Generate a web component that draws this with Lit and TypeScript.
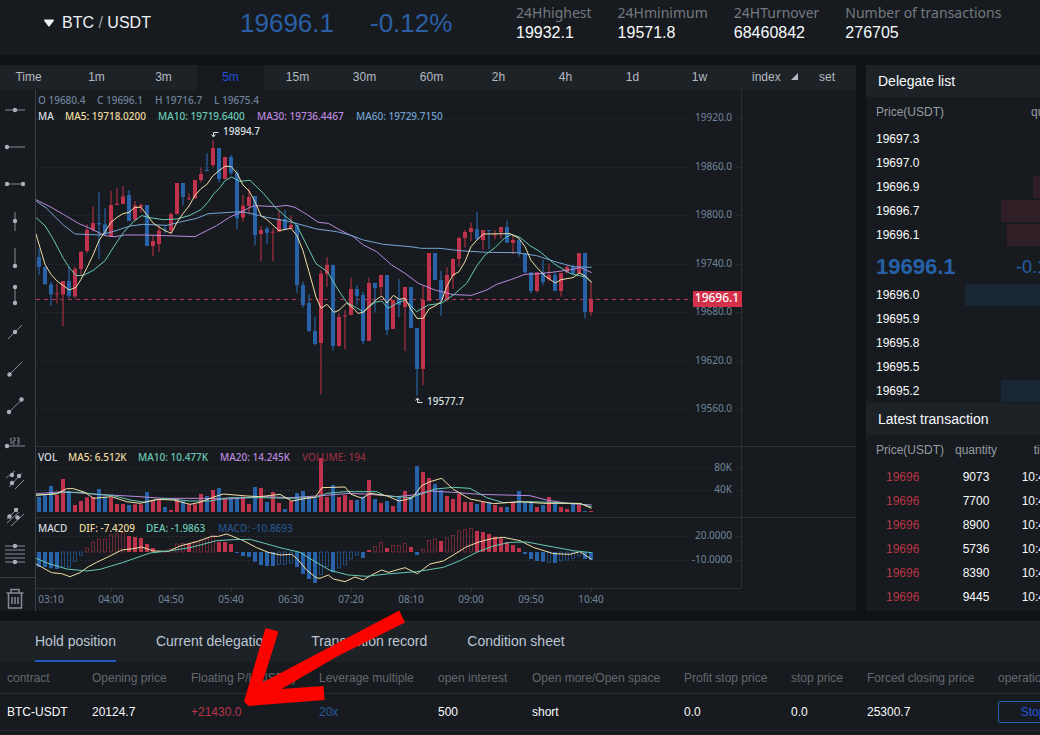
import { LitElement, html, svg, css } from "lit";
import { customElement, state } from "lit/decorators.js";
import { classMap } from "lit/directives/class-map.js";

/* Chart drawings are stored at three units to the pixel. */
type Candle = [string, number, number, number, number];

/* direction, high, body top, body bottom, low */
const CANDLES: Candle[] = [
  ["d", 490, 516, 546, 570], ["d", 546, 546, 598, 598], ["d", 590, 598, 628, 662], ["u", 595, 625, 628, 655],
  ["u", 588, 588, 628, 723], ["d", 545, 588, 632, 640], ["u", 545, 552, 634, 640], ["u", 500, 500, 552, 572],
  ["u", 418, 435, 498, 505], ["u", 365, 414, 435, 440], ["d", 322, 414, 418, 522], ["d", 370, 418, 448, 452],
  ["u", 318, 360, 454, 456], ["u", 308, 356, 360, 360], ["u", 303, 334, 357, 357], ["d", 315, 330, 408, 408],
  ["u", 348, 362, 404, 408], ["u", 355, 360, 366, 382], ["d", 360, 360, 483, 483], ["u", 450, 468, 483, 513],
  ["u", 420, 437, 477, 500], ["d", 420, 431, 434, 445], ["u", 382, 387, 437, 447], ["u", 294, 294, 387, 387],
  ["d", 294, 294, 336, 362], ["u", 325, 340, 343, 345], ["u", 285, 285, 340, 340], ["u", 247, 267, 285, 292],
  ["d", 205, 255, 258, 258], ["u", 165, 189, 240, 245], ["d", 189, 189, 282, 292], ["u", 216, 216, 282, 282],
  ["d", 210, 216, 264, 270], ["d", 255, 264, 400, 432], ["u", 330, 362, 398, 410], ["u", 310, 336, 363, 385],
  ["d", 333, 333, 450, 482], ["u", 422, 435, 447, 528], ["d", 425, 431, 444, 477], ["u", 428, 440, 443, 528],
  ["u", 378, 402, 440, 440], ["d", 375, 402, 433, 433], ["u", 392, 420, 430, 432], ["d", 420, 420, 600, 623],
  ["d", 590, 600, 660, 668], ["d", 628, 654, 738, 740], ["d", 695, 738, 777, 780], ["u", 556, 566, 774, 928],
  ["u", 516, 540, 567, 606], ["d", 540, 540, 783, 797], ["u", 685, 696, 783, 785], ["u", 675, 691, 694, 793],
  ["u", 578, 612, 690, 690], ["d", 600, 612, 633, 660], ["d", 620, 630, 768, 777], ["u", 578, 594, 768, 768],
  ["d", 594, 594, 609, 682], ["u", 570, 570, 606, 630], ["d", 570, 570, 735, 750], ["u", 645, 645, 732, 732],
  ["d", 582, 640, 660, 697], ["u", 606, 606, 666, 798], ["d", 606, 606, 729, 729], ["d", 729, 729, 852, 932],
  ["u", 600, 645, 852, 900], ["u", 504, 504, 648, 648], ["d", 504, 504, 585, 585], ["d", 557, 585, 645, 692],
  ["u", 547, 570, 645, 650], ["u", 520, 522, 573, 612], ["u", 455, 459, 522, 545], ["u", 435, 441, 459, 487],
  ["u", 413, 429, 441, 468], ["d", 381, 432, 462, 465], ["u", 435, 435, 465, 495], ["d", 435, 435, 438, 493],
  ["u", 435, 448, 451, 463], ["u", 426, 426, 442, 462], ["d", 407, 426, 473, 473], ["u", 450, 465, 474, 508],
  ["d", 460, 465, 505, 515], ["d", 505, 505, 562, 565], ["d", 562, 562, 618, 625], ["u", 562, 562, 618, 622],
  ["d", 524, 562, 591, 600], ["u", 535, 570, 583, 590], ["d", 562, 570, 618, 618], ["u", 564, 564, 618, 635],
  ["u", 540, 546, 562, 565], ["d", 540, 546, 565, 570], ["u", 504, 504, 565, 565], ["d", 504, 504, 681, 700],
  ["u", 590, 642, 681, 692],
];

const VOLUME_BASE = 201;
const VOLUMES = [
  156, 150, 123, 150, 102, 138, 180, 168, 157, 156, 132, 155, 157, 177, 177, 180, 178, 178, 141, 165, 165, 186, 195,
  160, 168, 178, 178, 147, 153, 135, 129, 158, 158, 160, 155, 177, 126, 129, 171, 141, 174, 192, 168, 144, 138, 155,
  160, 39, 156, 120, 156, 150, 165, 165, 155, 105, 162, 174, 168, 183, 155, 138, 155, 63, 81, 99, 117, 135, 153, 162,
  147, 171, 171, 177, 171, 171, 180, 186, 186, 171, 138, 171, 171, 186, 180, 156, 177, 186, 192, 177, 180, 198, 198,
];
const VOLUME_DOWN = new Set([
  0, 1, 2, 5, 10, 11, 15, 18, 21, 24, 28, 30, 32, 33, 36, 38, 41, 43, 44, 45, 46, 49, 53, 54, 56, 58, 60, 62, 63, 66,
  67, 73, 75, 78, 80, 81, 82, 84, 86, 89, 91,
]);

const MACD_ZERO = 321;
const MACD = [
  366, 366, 370, 372, 366, 366, 350, 332, 309, 291, 282, 282, 270, 267, 262, 273, 276, 279, 297, 309, 318, 319, 312,
  297, 295, 297, 290, 285, 280, 273, 291, 291, 297, 324, 333, 336, 350, 360, 363, 363, 358, 358, 354, 366, 387, 402,
  414, 388, 365, 382, 369, 360, 342, 330, 339, 315, 304, 292, 309, 302, 302, 295, 306, 330, 313, 286, 282, 288, 279,
  271, 258, 253, 250, 258, 261, 267, 275, 280, 291, 300, 309, 327, 342, 348, 350, 353, 354, 348, 345, 340, 333, 342,
  345,
];
const MACD_HOLLOW = new Set([
  4, 5, 6, 7, 8, 9, 10, 11, 12, 13, 14, 22, 23, 24, 26, 27, 28, 29, 40, 41, 42, 47, 48, 50, 51, 52, 53, 56, 57, 59,
  60, 61, 64, 65, 66, 68, 69, 70, 71, 72, 85, 87, 88, 89, 90,
]);

const PRICE_LINES = [
  { color: "#b98add", points: "108,344 150,365 190,388 235,415 270,430 315,452 345,455 375,450 430,450 500,452 585,455 620,437 650,422 690,396 720,383 750,367 765,362 830,365 860,361 885,367 920,388 955,412 985,415 1020,435 1060,455 1090,480 1130,500 1175,540 1215,565 1255,595 1305,615 1360,629 1415,631 1460,615 1490,598 1535,583 1575,568 1620,566 1670,560 1720,553 1740,547 1775,563" },
  { color: "#76a5d4", points: "108,348 140,370 190,420 225,447 300,450 345,438 390,423 430,418 500,421 545,410 590,400 625,386 690,382 720,380 750,385 800,397 870,410 950,432 1010,440 1050,450 1090,465 1150,478 1230,485 1265,490 1320,490 1380,497 1460,502 1550,503 1610,512 1665,530 1720,545 1775,547" },
  { color: "#68c9b4", points: "108,398 135,422 160,463 190,520 208,548 228,572 250,571 280,556 315,527 340,487 370,443 400,410 425,392 450,398 490,404 530,402 567,392 603,374 625,350 640,328 660,308 675,287 695,276 720,289 750,286 790,325 825,366 855,393 890,420 915,470 948,536 982,560 1015,615 1040,652 1090,680 1125,652 1145,648 1165,670 1190,655 1215,645 1250,680 1285,660 1324,655 1360,630 1400,595 1431,542 1455,510 1485,488 1515,458 1535,448 1560,457 1590,482 1620,500 1665,538 1710,565 1738,572 1756,576 1775,592" },
  { color: "#f3e0a8", points: "108,447 120,488 135,538 153,568 171,588 190,602 208,615 228,607 243,583 261,548 279,510 297,467 315,440 333,412 351,397 369,386 387,382 405,367 423,367 441,390 459,414 477,426 495,437 514,445 531,412 549,386 567,363 585,331 603,311 621,298 639,272 657,257 675,244 693,244 711,265 729,300 747,318 765,350 783,392 801,404 837,437 873,430 891,452 909,497 927,560 948,636 963,670 981,658 1002,682 1017,676 1040,654 1058,668 1074,685 1090,682 1107,664 1125,647 1145,633 1161,654 1180,631 1198,643 1215,640 1233,673 1251,700 1270,700 1287,672 1305,663 1324,650 1340,605 1359,570 1377,560 1395,530 1413,485 1431,465 1450,447 1530,446 1557,460 1575,485 1593,526 1611,548 1635,573 1666,594 1683,584 1719,578 1738,564 1756,573 1775,592" },
];

const STUDY_LINES = [
  { color: "#b98add", points: "18,146 100,140 200,148 330,155 400,160 520,160 600,162 700,155 780,158 860,153 960,145 1020,148 1100,155 1150,150 1200,138 1270,142 1350,148 1500,152 1550,165 1620,176 1685,180" },
  { color: "#68c9b4", points: "18,152 100,142 150,142 200,148 250,152 300,165 345,172 400,160 480,168 540,168 600,158 700,158 780,160 860,157 890,145 945,140 1040,140 1065,152 1140,158 1180,145 1215,132 1270,127 1320,130 1370,158 1420,173 1500,170 1560,172 1650,176 1685,186" },
  { color: "#f3e0a8", points: "18,150 80,147 110,131 130,131 165,142 190,160 245,155 290,170 330,175 380,163 430,165 480,178 510,172 545,158 580,147 650,153 690,155 750,148 785,168 830,160 855,157 876,128 945,126 963,148 997,160 1020,145 1070,152 1107,168 1145,160 1175,122 1200,110 1235,100 1270,133 1320,162 1390,176 1470,170 1540,175 1650,175 1685,190" },
  { color: "#f3e0a8", points: "18,357 65,383 95,386 120,395 150,383 175,365 200,352 240,333 275,315 310,311 335,306 370,318 415,319 450,303 500,290 545,274 565,274 590,267 610,275 640,287 680,308 715,322 750,330 785,328 800,340 830,375 858,398 870,400 895,390 910,402 945,410 975,396 1000,405 1025,390 1055,375 1075,382 1125,368 1162,386 1200,357 1240,348 1270,330 1310,305 1350,290 1390,280 1420,277 1470,287 1510,307 1570,326 1620,328 1650,320 1685,343" },
  { color: "#68c9b4", points: "18,340 60,357 110,372 170,378 210,373 280,352 360,324 415,318 480,308 560,287 610,284 660,283 700,294 750,308 810,322 855,350 900,376 955,390 1010,394 1070,387 1160,380 1240,367 1290,347 1340,322 1390,303 1440,292 1490,291 1570,306 1630,317 1685,323" },
];

const TIMES = ["03:10", "04:00", "04:50", "05:40", "06:30", "07:20", "08:10", "09:00", "09:50", "10:40"];

const AXIS = [
  { y: 118, label: "19920.0" }, { y: 167, label: "19860.0" }, { y: 215, label: "19800.0" },
  { y: 264, label: "19740.0" }, { y: 312, label: "19680.0" }, { y: 361, label: "19620.0" },
  { y: 409, label: "19560.0" }, { y: 468, label: "80K" }, { y: 490, label: "40K" },
  { y: 536, label: "20.0000" }, { y: 560, label: "-10.0000" },
];

const LABELS = [
  { x: 38, y: 104, c: "#70829a", t: "O 19680.4" }, { x: 97, y: 104, c: "#70829a", t: "C 19696.1" },
  { x: 155, y: 104, c: "#70829a", t: "H 19716.7" }, { x: 214, y: 104, c: "#70829a", t: "L 19675.4" },
  { x: 38, y: 120, c: "#d5dae0", t: "MA" }, { x: 65, y: 120, c: "#ecd9a0", t: "MA5: 19718.0200" },
  { x: 158, y: 120, c: "#68c9b4", t: "MA10: 19719.6400" }, { x: 257, y: 120, c: "#bb86dd", t: "MA30: 19736.4467" },
  { x: 356, y: 120, c: "#6fa0cf", t: "MA60: 19729.7150" },
  { x: 38, y: 461, c: "#d5dae0", t: "VOL" }, { x: 68, y: 461, c: "#ecd9a0", t: "MA5: 6.512K" },
  { x: 138, y: 461, c: "#68c9b4", t: "MA10: 10.477K" }, { x: 220, y: 461, c: "#bb86dd", t: "MA20: 14.245K" },
  { x: 302, y: 461, c: "#962e42", t: "VOLUME: 194" },
  { x: 38, y: 532, c: "#d5dae0", t: "MACD" }, { x: 79, y: 532, c: "#ecd9a0", t: "DIF: -7.4209" },
  { x: 146, y: 532, c: "#68c9b4", t: "DEA: -1.9863" }, { x: 218, y: 532, c: "#265291", t: "MACD: -10.8693" },
  { x: 223, y: 135, c: "#dde1e6", t: "19894.7" }, { x: 427, y: 405, c: "#dde1e6", t: "19577.7" },
];

@customElement("price-chart")
export class PriceChart extends LitElement {
  static styles = css`
    :host { display: block; flex: 1; min-width: 0; }
    svg { display: block; width: 100%; height: auto; }
    text { font: 500 10px "Noto Sans", sans-serif; }
    .up { fill: #c0334c; }
    .down { fill: #2862a8; }
    .wick.up { fill: #7f2a38; }
    .wick.down { fill: #234f80; }
    .hollow.up { fill: none; stroke: #963043; stroke-width: 2; }
    .hollow.down { fill: none; stroke: #2862a8; stroke-width: 2; }
    .axis { fill: #71859c; text-anchor: end; font-weight: 400; }
    .time { fill: #71859c; text-anchor: middle; font-weight: 400; }
    .grid { stroke: #262c32; stroke-dasharray: 2 2; }
    .rule { stroke: #2a3036; }
    .last { stroke: #c0334c; stroke-dasharray: 4 4; }
    .line { fill: none; stroke-width: 3; stroke-linejoin: round; }
    .mark { fill: none; stroke: #dde1e6; }
    .tag-box { fill: #d4304a; }
    .tag { fill: #fff; font-size: 12px; font-weight: 500; text-anchor: middle; }
  `;

  private bar(cls: string, x: number, a: number, b: number, w: number) {
    return svg`<rect class=${cls} x=${x - w / 2} y=${Math.min(a, b)} width=${w} height=${Math.max(3, Math.abs(b - a))} />`;
  }

  private lines(list: { color: string; points: string }[]) {
    return list.map((l) => svg`<polyline class="line" stroke=${l.color} points=${l.points} />`);
  }

  render() {
    return html`
      <svg viewBox="36 90 820 521" role="img" aria-label="BTC/USDT five minute chart">
        ${AXIS.map((a) => svg`<line class="grid" x1="36" x2="741" y1=${a.y + 0.5} y2=${a.y + 0.5} />`)}
        <path class="rule" fill="none" d="M36 446.5H856M36 517.5H856M36 588.5H741M741.5 90V588" />
        ${TIMES.map((_, i) => svg`<path class="rule" d="M${51.5 + i * 60} 588v4" />`)}
        <line class="last" x1="36" x2="693" y1="299.5" y2="299.5" />
        <g transform="translate(0 85) scale(0.33333)">
          ${CANDLES.map(([d, h, t, b, l], i) => {
            const dir = d === "u" ? "up" : "down";
            const x = 117 + 18 * i;
            return svg`${this.bar("wick " + dir, x, h, l, 5)}${this.bar(dir, x, t, b, 12)}`;
          })}
          ${this.lines(PRICE_LINES)}
        </g>
        <g transform="translate(30 445) scale(0.33333)">
          ${VOLUMES.map((v, i) => this.bar(VOLUME_DOWN.has(i) ? "down" : "up", 27 + 18 * i, v, VOLUME_BASE, 12))}
          ${MACD.map((v, i) => {
            const dir = v > MACD_ZERO ? "down" : "up";
            return MACD_HOLLOW.has(i)
              ? this.bar("hollow " + dir, 27 + 18 * i, v, MACD_ZERO, 10)
              : this.bar(dir, 27 + 18 * i, v, MACD_ZERO, 12);
          })}
          ${this.lines(STUDY_LINES)}
        </g>
        ${AXIS.map((a) => svg`
          <rect x=${a.label.length > 3 ? 686 : 711} y=${a.y - 6} width=${a.label.length > 3 ? 48 : 23} height="12" fill="#171b1f" />
          <text class="axis" x="732" y=${a.y + 3}>${a.label}</text>`)}
        ${TIMES.map((t, i) => svg`<text class="time" x=${51 + i * 60} y="603">${t}</text>`)}
        ${LABELS.map((l) => svg`<text x=${l.x} y=${l.y} fill=${l.c}>${l.t}</text>`)}
        <path class="mark" d="M218.5 132.5h-5v4M211.5 134.5l2 2.500l2-2.500" />
        <path class="mark" d="M422.500 402.500h-5v-4M415.500 400.500l2-2.500l2 2.500" />
        <rect class="tag-box" x="693" y="291" width="49" height="16" />
        <text class="tag" x="717" y="302">19696.1</text>
      </svg>
    `;
  }
}

interface Tool { name: string; lines: string; dots: [number, number][]; }
const TOOLS: Tool[] = [
  { name: "Horizontal line", lines: "M5 15H25", dots: [[15, 15]] },
  { name: "Horizontal ray", lines: "M7 15H25", dots: [[7, 15]] },
  { name: "Horizontal segment", lines: "M7 15H23", dots: [[7, 15], [23, 15]] },
  { name: "Vertical line", lines: "M15 6V25", dots: [[15, 15]] },
  { name: "Vertical ray", lines: "M15 5V23", dots: [[15, 23]] },
  { name: "Vertical segment", lines: "M15 7V23", dots: [[15, 7], [15, 23]] },
  { name: "Straight line", lines: "M8 22L22 8", dots: [[15, 15]] },
  { name: "Ray", lines: "M9 21L22 8", dots: [[9.5, 20.5]] },
  { name: "Segment", lines: "M9 21L21.500 9", dots: [[9, 21], [21.5, 8.5]] },
  { name: "Price line", lines: "M7 18H25M10 11l1-1v6M13 10h2v3h-2v3h2M17 10h2v3h-2M19 13v3h-2", dots: [[7, 18]] },
  { name: "Price channel", lines: "M6 13L15 6M9 22L22 8M15 24L24 15", dots: [[12, 10], [19, 11], [12, 18]] },
  { name: "Parallel lines", lines: "M7 17L18 6M7 21L19 10M11 24L24 12", dots: [[16, 8], [9.5, 14.5], [17.5, 15.5]] },
  { name: "Fibonacci", lines: "M5 7H25M5 11H25M5 15H25M5 19H25M5 23H25", dots: [[15, 7], [15, 23]] },
];

@customElement("drawing-tools")
export class DrawingTools extends LitElement {
  static styles = css`
    :host { display: flex; flex-direction: column; flex: none; width: 35px; border-right: 1px solid #3a3f44; padding-top: 1px; }
    button { display: flex; align-items: center; height: 37px; padding: 0; border: 0; background: none; cursor: pointer; }
    .trash { margin-top: 5px; height: 34px; padding-top: 8px; border-top: 1px solid #3a3f44; }
    svg { display: block; flex: none; width: 30px; height: 30px; fill: none; stroke: #858a93; }
    circle { fill: #aab0ba; stroke: none; }
    .bin { stroke: #858b94; stroke-width: 1.5; }
  `;

  render() {
    return html`
      ${TOOLS.map((t) => html`
        <button type="button" aria-label=${t.name}>
          <svg viewBox="0 0 30 30"><path d=${t.lines} />${t.dots.map(([x, y]) => svg`<circle cx=${x} cy=${y} r="2.2" />`)}</svg>
        </button>`)}
      <button type="button" class="trash" aria-label="Remove all">
        <svg viewBox="0 0 30 30"><path class="bin" d="M6.500 9H23.500M11 9V5.500H19V9M8.500 9V24H21.500V9M12 13V20M15 13V20M18 13V20" /></svg>
      </button>
    `;
  }
}

const ASKS = [
  { price: "19697.3", depth: 0, qty: "12" }, { price: "19697.0", depth: 0, qty: "30" },
  { price: "19696.9", depth: 153, qty: "1840" }, { price: "19696.7", depth: 185, qty: "2213" },
  { price: "19696.1", depth: 179, qty: "2150" },
];
const BIDS = [
  { price: "19696.0", depth: 221, qty: "2640" }, { price: "19695.9", depth: 0, qty: "24" },
  { price: "19695.8", depth: 0, qty: "18" }, { price: "19695.5", depth: 0, qty: "9" },
  { price: "19695.2", depth: 185, qty: "2204" },
];
const TRADES = ["9073", "7700", "8900", "5736", "8390", "9445"];

@customElement("order-panel")
export class OrderPanel extends LitElement {
  static styles = css`
    :host { display: block; overflow: hidden; background: #171b1f; color: #f8fafc; font-size: 12px; }
    .inner { width: 320px; }
    h2 { margin: 0; padding-left: 12px; font-size: 14px; font-weight: 400; line-height: 32px; background: #1d2227; }
    table { width: 100%; border-collapse: collapse; table-layout: fixed; }
    th, td { box-sizing: border-box; padding: 0; height: 24px; font-weight: 400; text-align: left; white-space: nowrap; }
    th { height: 30px; color: #969ba2; }
    .price { width: 165px; padding-left: 10px; }
    .ask { background: linear-gradient(#2f1e26, #2f1e26) right center / var(--depth) 22px no-repeat; }
    .bid { background: linear-gradient(#192735, #192735) right center / var(--depth) 22px no-repeat; }
    .book .amount { padding-left: 80px; }
    .now { display: grid; grid-template-columns: 150px 1fr; align-items: center; box-sizing: border-box; height: 36px; padding-top: 4px; color: #2661a8; font-size: 18px; }
    .now strong { padding-left: 10px; font-size: 22px; }
    .c1 { width: 74px; }
    .c2 { width: 72px; text-align: center; }
    .c3 { width: 66px; text-align: center; }
    .tape th:first-child { padding-left: 10px; }
    .tape td:first-child { padding-left: 20px; color: #b93548; }
  `;

  private rows(list: typeof ASKS, cls: string) {
    return html`<table class="book">
      <tbody>
        ${list.map((r) => html`<tr class=${cls} style="--depth: ${r.depth}px"><td class="price">${r.price}</td><td class="amount">${r.qty}</td></tr>`)}
      </tbody>
    </table>`;
  }

  render() {
    return html`
      <div class="inner">
        <h2>Delegate list</h2>
        <table><thead><tr><th class="price">Price(USDT)</th><th>quantity</th></tr></thead></table>
        ${this.rows(ASKS, "ask")}
        <div class="now"><strong>19696.1</strong><span>-0.12%</span></div>
        ${this.rows(BIDS, "bid")}
        <h2>Latest transaction</h2>
        <table class="tape">
          <thead><tr><th class="c1">Price(USDT)</th><th class="c2">quantity</th><th class="c3">time</th><th></th></tr></thead>
          <tbody>
            ${TRADES.map((q) => html`<tr><td>19696</td><td class="c2">${q}</td><td class="c3">10:40:12</td><td></td></tr>`)}
          </tbody>
        </table>
      </div>
    `;
  }
}

const COLUMNS = [
  { label: "contract", width: 85 }, { label: "Opening price", width: 99 }, { label: "Floating P/L(USDT)", width: 128 },
  { label: "Leverage multiple", width: 119 }, { label: "open interest", width: 94 },
  { label: "Open more/Open space", width: 152 }, { label: "Profit stop price", width: 107 },
  { label: "stop price", width: 76 }, { label: "Forced closing price", width: 131 }, { label: "operation", width: 170 },
];

@customElement("positions-panel")
export class PositionsPanel extends LitElement {
  static styles = css`
    :host { display: block; flex: 1; overflow: hidden; background: #171b1f; }
    nav { display: flex; gap: 40px; padding-left: 35px; height: 41px; background: #1d2227; border-top: 1px solid #22272d; box-sizing: border-box; }
    button { font-family: inherit; cursor: pointer; }
    .tab { padding: 0; border: 0; border-bottom: 2px solid transparent; background: none; color: #bcc6d4; font-size: 14px; }
    .on { border-color: #2058c0; }
    table { width: 1161px; table-layout: fixed; border-collapse: collapse; font-size: 12px; }
    th, td { padding: 0 0 0 7px; text-align: left; font-weight: 400; white-space: nowrap; }
    th { height: 31px; color: #63686d; }
    td { height: 36px; color: #f8fafc; }
    tr { border-bottom: 1px solid #2a2e32; }
    .gain { color: #b93548; }
    .lev { color: #265c9e; }
    .stop { width: 100px; height: 22px; border: 1px solid #2a5fb4; border-radius: 2px; background: none; color: #2457d6; font-size: 12px; }
  `;

  @state() private active = 0;

  render() {
    const tabs = ["Hold position", "Current delegation", "Transaction record", "Condition sheet"];
    return html`
      <nav>
        ${tabs.map((t, i) => html`<button type="button" class=${classMap({ tab: true, on: i === this.active })} @click=${() => (this.active = i)}>${t}</button>`)}
      </nav>
      <table>
        <colgroup>${COLUMNS.map((c) => html`<col width=${c.width} />`)}</colgroup>
        <thead><tr>${COLUMNS.map((c) => html`<th>${c.label}</th>`)}</tr></thead>
        <tbody>
          <tr>
            <td>BTC-USDT</td><td>20124.7</td><td class="gain">+21430.0</td><td class="lev">20x</td><td>500</td>
            <td>short</td><td>0.0</td><td>0.0</td><td>25300.7</td>
            <td><button type="button" class="stop">Stop profit</button></td>
          </tr>
        </tbody>
      </table>
    `;
  }
}

const STATS = [
  ["24Hhighest", "19932.1"], ["24Hminimum", "19571.8"], ["24HTurnover", "68460842"], ["Number of transactions", "276705"],
];
const INTERVALS = ["Time", "1m", "3m", "5m", "15m", "30m", "60m", "2h", "4h", "1d", "1w"];

@customElement("app-root")
export class AppRoot extends LitElement {
  static styles = css`
    :host { display: flex; flex-direction: column; gap: 10px; position: relative; min-height: 100vh; overflow: hidden; background: #101316; font-family: "Liberation Sans", Arial, sans-serif; }
    button { font-family: inherit; cursor: pointer; }
    header { display: grid; grid-template-columns: 196px 130px 146px 1fr; height: 55px; padding-left: 44px; background: #171b1f; }
    .pair { display: flex; gap: 8px; align-items: center; align-self: start; height: 46px; padding: 0; border: 0; background: none; color: #eef1f4; font-size: 16px; }
    .pair i { color: #9aa1a8; font-style: normal; }
    .big { align-self: start; color: #2a5fa6; font-size: 26px; line-height: 46px; }
    dl { display: flex; gap: 26px; margin: 3px 0 0; }
    dt { color: #737981; font: 14px/20px "Noto Sans", sans-serif; white-space: nowrap; }
    dd { margin: 0; color: #f8fafc; font-size: 16px; line-height: 20px; }
    main { display: grid; grid-template-columns: minmax(0, 1fr) 174px; gap: 10px; }
    .chart { background: #171b1f; }
    .intervals { display: flex; height: 25px; background: #1d2227; overflow: hidden; }
    .intervals button { flex: none; width: 67px; padding: 0 0 2px; border: 0; background: none; color: #b4bac1; font-size: 12px; }
    .intervals .time { width: 57px; margin-right: 6px; }
    .intervals .on { background: #161a1f; color: #2350dd; }
    .intervals .menu { display: flex; gap: 10px; align-items: center; padding-left: 19px; }
    .body { display: flex; }
    .arrow { position: absolute; left: 240px; top: 605px; width: 170px; height: 105px; pointer-events: none; fill: #fb0400; }
  `;

  @state() private interval = "5m";

  render() {
    return html`
      <header>
        <button type="button" class="pair">
          <svg width="10" height="8" viewBox="0 0 10 8"><path fill="#eef1f4" d="M0 1.500Q0 .5 1 .5H9Q10 .5 10 1.500L5.500 7.500H4.500Z" /></svg>
          <span>BTC <i>/</i> USDT</span>
        </button>
        <span class="big">19696.1</span>
        <span class="big">-0.12%</span>
        <dl>${STATS.map(([k, v]) => html`<div><dt>${k}</dt><dd>${v}</dd></div>`)}</dl>
      </header>
      <main>
        <section class="chart">
          <div class="intervals">
            ${INTERVALS.map((t) => html`<button type="button" class=${classMap({ time: t === "Time", on: t === this.interval })} @click=${() => (this.interval = t)}>${t}</button>`)}
            <button type="button" class="menu">index <svg width="7" height="7" viewBox="0 0 6 6"><path fill="#b4bac1" d="M6 0V6H0Z" /></svg></button>
            <button type="button" class="menu">set</button>
          </div>
          <div class="body">
            <drawing-tools></drawing-tools>
            <price-chart></price-chart>
          </div>
        </section>
        <order-panel></order-panel>
      </main>
      <positions-panel></positions-panel>
      <svg class="arrow" viewBox="240 605 170 105" aria-hidden="true">
        <path d="M399.300 610.500L405 622.500L337 656.500L281.500 689L323.500 686L324.500 700L248.500 706L244 701.500L265.500 628L278.500 631.500L262.500 682.500Z" />
      </svg>
    `;
  }
}
